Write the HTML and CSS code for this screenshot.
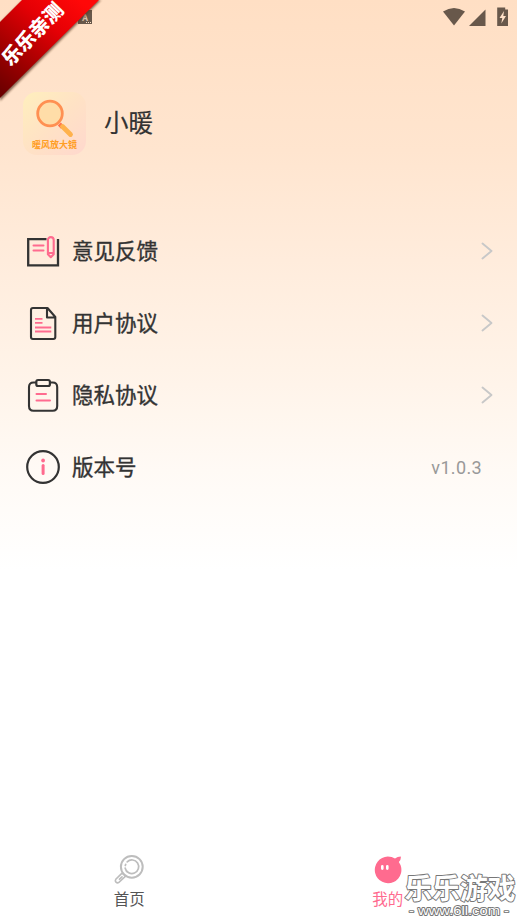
FILE: index.html
```html
<!DOCTYPE html>
<html lang="zh-CN">
<head>
<meta charset="UTF-8">
<meta name="viewport" content="width=device-width, initial-scale=1">
<title>我的</title>
<link rel="stylesheet" href="styles.css">
</head>
<body>
<div class="screen">
  <header class="status">
    <svg width="78" height="28" viewBox="0 0 78 28" fill="#68584b">
      <path d="M3 11.5Q14 4.500 25 11.500L14 25.500Z"/>
      <path d="M45.500 9.500V26H29Z"/>
      <path d="M60 7.500h-2.800V26h10.800V9.500h-2.800V7.500Z"/>
      <path d="M64 11l-4.500 7h2.800l-1 5.500 4.700-7.500h-2.700Z" fill="#ffe1c8"/>
    </svg>
  </header>

  <section class="profile">
    <div class="avatar">
      <svg width="64" height="64" viewBox="0 0 64 64">
        <circle cx="27" cy="21.500" r="12.300" fill="#ffdda8" stroke="#ff9052" stroke-width="2.800"/>
        <path d="M34.800 33.500l3-3 3.200 3.200-3 3Z" fill="#ff744d"/>
        <path d="M39.500 34.500L47.500 42.500" stroke="#ffb24d" stroke-width="4.800" stroke-linecap="round"/>
        <text class="avatar-text" x="31.500" y="56" text-anchor="middle">暖风放大镜</text>
      </svg>
    </div>
    <h1 class="name">小暖</h1>
  </section>

  <main class="menu">
    <div class="row">
      <svg class="row-icon" viewBox="0 0 36 36" fill="none">
        <path d="M21.500 6.200H3.200V32.300H33V6" stroke="#333" stroke-width="2.300"/>
        <path d="M8.500 12.500H18.500M8.500 17.500H18.500" stroke="#ff6b8f" stroke-width="2" stroke-linecap="round"/>
        <path d="M22.900 7a2.900 2.900 0 0 1 5.800 0V21.200L25.800 24.200 22.900 21.200ZM22.900 20H28.700" stroke="#ff6b8f" stroke-width="2.100" stroke-linejoin="round"/>
      </svg>
      <span class="label">意见反馈</span>
      <svg class="arrow" viewBox="0 0 12 18"><path d="M1.500 1.500L10.500 9 1.500 16.500"/></svg>
    </div>
    <div class="row">
      <svg class="row-icon" viewBox="0 0 36 36" fill="none">
        <path d="M22.500 3H8Q6 3 6 5V32Q6 34 8 34H28.300Q30.300 34 30.300 32V12ZM22 3V12.500H30.300" stroke="#333" stroke-width="2.100" stroke-linejoin="round"/>
        <path d="M10 13.800H17.500M10 17.800H17.500M10 22.500H26.300M10 26.500H26.300" stroke="#ff6b8f" stroke-width="1.800"/>
      </svg>
      <span class="label">用户协议</span>
      <svg class="arrow" viewBox="0 0 12 18"><path d="M1.500 1.500L10.500 9 1.500 16.500"/></svg>
    </div>
    <div class="row">
      <svg class="row-icon" viewBox="0 0 36 36" fill="none">
        <path d="M11.500 5.500H8.500Q4 5.500 4 10V29Q4 33.700 8.500 33.700H27.700Q32.200 33.700 32.200 29V10Q32.200 5.500 27.700 5.500H25" stroke="#333" stroke-width="2.100"/>
        <rect x="11.300" y="3" width="13.600" height="6" rx="1.800" stroke="#333" stroke-width="2.200"/>
        <path d="M11.500 17H21M11.500 23.600H25" stroke="#ff6b8f" stroke-width="2" stroke-linecap="round"/>
      </svg>
      <span class="label">隐私协议</span>
      <svg class="arrow" viewBox="0 0 12 18"><path d="M1.500 1.500L10.500 9 1.500 16.500"/></svg>
    </div>
    <div class="row">
      <svg class="row-icon" viewBox="0 0 36 36" fill="none">
        <circle cx="18" cy="18" r="15.800" stroke="#333" stroke-width="2.200"/>
        <circle cx="18.100" cy="11.500" r="1.900" fill="#ff6b8f"/>
        <path d="M18.100 16.500V24.500" stroke="#ff6b8f" stroke-width="3" stroke-linecap="round"/>
      </svg>
      <span class="label">版本号</span>
      <span class="version">v1.0.3</span>
    </div>
  </main>

  <nav class="tabs">
    <div class="tab">
      <svg width="30" height="30" viewBox="0 0 30 30" fill="none" stroke="#bdbdbd">
        <circle cx="17.800" cy="12.800" r="10.900" stroke-width="2"/>
        <path d="M13.200 7.800A6.800 6.800 0 1 1 11.200 14.200M11.300 11.500L11.700 10.400" stroke-width="1.700" stroke-linecap="round"/>
        <path d="M7.800 19.400L1.800 25.300Q.8 26.900 2 28.200 3.400 29.400 4.900 28.400L11.200 22.500Q10.200 19.800 7.800 19.400ZM5.500 25.200L8 22.800" stroke-width="1.600" stroke-linecap="round"/>
      </svg>
      <span>首页</span>
    </div>
    <div class="tab active">
      <svg width="30" height="30" viewBox="0 0 30 30">
        <path d="M14.800 2.600Q19 2.600 22 4.400 24.500 2.600 27.800 2.600 28.200 6 25.800 8A13.300 13.300 0 1 1 14.800 2.600Z" fill="#ff6b8f"/>
        <path d="M9.300 12.200v2.400M14.300 12.200v2.400" stroke="#fff" stroke-width="2.600" stroke-linecap="round"/>
      </svg>
      <span>我的</span>
    </div>
  </nav>

  <svg class="ribbon" viewBox="0 0 110 105">
    <defs>
      <linearGradient id="red" x1="0" y1="1" x2=".8" y2="0">
        <stop offset="0" stop-color="#650000"/>
        <stop offset=".3" stop-color="#990000"/>
        <stop offset=".7" stop-color="#e50005"/>
        <stop offset="1" stop-color="#ff0808"/>
      </linearGradient>
      <filter id="shade"><feGaussianBlur stdDeviation="1"/></filter>
    </defs>
    <rect x="78" y="10" width="14" height="14" fill="#68584b"/>
    <text class="badge-text" x="82" y="21">A</text>
    <path d="M86 22.500h1M88 22.500h1M90 22.500h1" stroke="#ffe1c8"/>
    <path d="M23 0H101L0 101V23Z" fill="#5a3b2b" opacity=".75" filter="url(#shade)"/>
    <path d="M22 0H99L0 98V22Z" fill="url(#red)"/>
    <text class="ribbon-text" transform="translate(10.500 67) rotate(-46)">乐乐亲测</text>
  </svg>

  <svg class="watermark" viewBox="0 0 117 50">
    <text class="mark-title" x="4.500" y="28.500" textLength="111" lengthAdjust="spacingAndGlyphs">乐乐游戏</text>
    <text class="mark-url" x="9" y="44.500" textLength="100" lengthAdjust="spacingAndGlyphs">- www.6ll.com -</text>
  </svg>
</div>
</body>
</html>
```
FILE: styles.css
```css
* {
  box-sizing: border-box;
}

body {
  margin: 0;
  font-family: Roboto, "Noto Sans CJK SC", sans-serif;
  color: #333;
}

.screen {
  position: relative;
  display: flex;
  flex-direction: column;
  width: 100%;
  height: 920px;
  overflow: hidden;
  background: linear-gradient(#ffdfc4 0, #ffe5cf 150px, #ffecdc 260px, #fff3e8 370px, #fffaf5 470px, #fff 570px);
}

.status {
  display: flex;
  justify-content: flex-end;
  height: 91px;
}

.status svg {
  margin-right: -1px;
}

.profile {
  display: flex;
  align-items: center;
  height: 64px;
  padding-left: 23px;
}

.avatar {
  width: 63px;
  height: 63px;
  border-radius: 14px;
  background: linear-gradient(135deg, #ffefbd, #ffe2c5 50%, #ffd8ce);
}

.avatar svg,
.row svg,
.tab svg {
  display: block;
}

.avatar-text {
  font: bold 9px "Noto Sans CJK SC", sans-serif;
  fill: #ff9e24;
}

.name {
  margin: 2px 0 0 18px;
  font-size: 24.5px;
  font-weight: 400;
  line-height: 36px;
  -webkit-text-stroke: .2px #333;
}

.menu {
  margin-top: 60px;
  padding: 0 24px 0 25px;
}

.row {
  display: flex;
  align-items: center;
  height: 72px;
}

.row-icon {
  width: 36px;
  height: 36px;
}

.label {
  flex: 1;
  margin: 2px 0 0 11px;
  font-size: 21.5px;
  line-height: 32px;
  -webkit-text-stroke: .35px #333;
}

.arrow {
  width: 12px;
  height: 18px;
  fill: none;
  stroke: #c8c8c8;
  stroke-width: 1.9;
  stroke-linecap: round;
  stroke-linejoin: round;
}

.version {
  margin-right: 11px;
  font-size: 18px;
  letter-spacing: .35px;
  color: #999;
}

.tabs {
  display: flex;
  height: 66px;
  margin-top: auto;
}

.tab {
  flex: 1;
  display: flex;
  flex-direction: column;
  align-items: center;
  font-size: 15.5px;
  line-height: 22px;
  color: #555;
}

.tab span {
  margin-top: 5px;
}

.tab.active {
  color: #ff6b8f;
}

.ribbon {
  position: absolute;
  top: 0;
  left: 0;
  width: 110px;
  height: 105px;
}

.badge-text {
  font: bold 9px Roboto, sans-serif;
  fill: #d8c3b0;
}

.ribbon-text {
  font: 900 19.5px "Noto Sans CJK SC", sans-serif;
  fill: #fff;
}

.watermark {
  position: absolute;
  right: 0;
  bottom: 0;
  width: 117px;
  height: 50px;
}

.mark-title,
.mark-url {
  paint-order: stroke;
  fill: #fff;
  stroke: #777;
  stroke-linejoin: round;
}

.mark-title {
  font: bold 28px "Noto Sans CJK SC", sans-serif;
  stroke-width: 2px;
}

.mark-url {
  font: 12.5px "Liberation Sans", sans-serif;
  fill: #fff;
  stroke-width: 1.8px;
}
```
